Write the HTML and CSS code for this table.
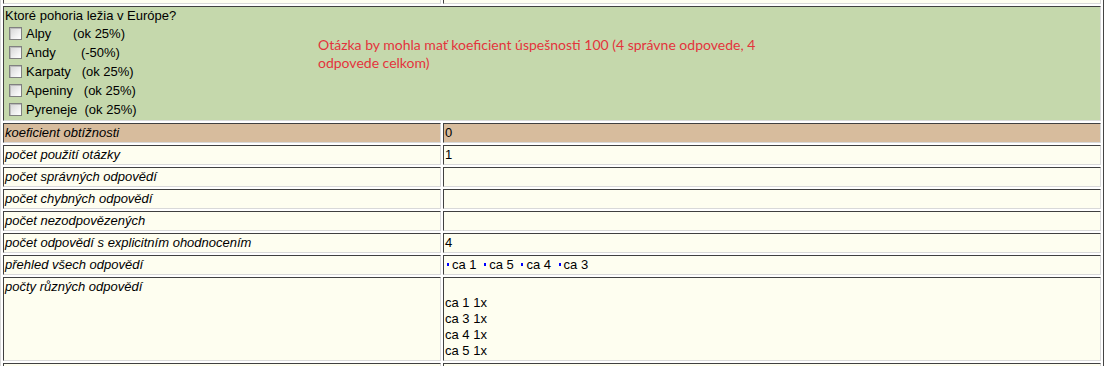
FILE: index.html
```html
<!DOCTYPE html>
<html lang="sk">
<head>
<meta charset="utf-8">
<title>Otázka</title>
<link rel="stylesheet" href="styles.css">
</head>
<body>
<table class="stats">
  <tr class="row">
    <td class="key"></td>
    <td class="val"></td>
  </tr>
  <tr class="row question">
    <td colspan="2" class="qcell">
      <div class="qwrap">
        <div class="qmain">
          <div class="qtitle">Ktoré pohoria ležia v Európe?</div>
          <div class="opt"><input type="checkbox"><span class="otext">Alpy&nbsp;&nbsp;&nbsp;&nbsp;&nbsp;&nbsp;(ok 25%)</span></div>
          <div class="opt"><input type="checkbox"><span class="otext">Andy&nbsp;&nbsp;&nbsp;&nbsp;&nbsp;&nbsp;&nbsp;(-50%)</span></div>
          <div class="opt"><input type="checkbox"><span class="otext">Karpaty&nbsp;&nbsp;&nbsp;(ok 25%)</span></div>
          <div class="opt"><input type="checkbox"><span class="otext">Apeniny&nbsp;&nbsp;&nbsp;(ok 25%)</span></div>
          <div class="opt"><input type="checkbox"><span class="otext">Pyreneje&nbsp;&nbsp;(ok 25%)</span></div>
        </div>
        <div class="note">Otázka by mohla mať koeficient úspešnosti 100 (4 správne odpovede, 4 odpovede celkom)</div>
      </div>
    </td>
  </tr>
  <tr class="row tan">
    <td class="key">koeficient obtížnosti</td>
    <td class="val">0</td>
  </tr>
  <tr class="row">
    <td class="key">počet použití otázky</td>
    <td class="val">1</td>
  </tr>
  <tr class="row">
    <td class="key">počet správných odpovědí</td>
    <td class="val"></td>
  </tr>
  <tr class="row">
    <td class="key">počet chybných odpovědí</td>
    <td class="val"></td>
  </tr>
  <tr class="row">
    <td class="key">počet nezodpovězených</td>
    <td class="val"></td>
  </tr>
  <tr class="row">
    <td class="key">počet odpovědí s explicitním ohodnocením</td>
    <td class="val">4</td>
  </tr>
  <tr class="row">
    <td class="key">přehled všech odpovědí</td>
    <td class="val"><span class="dot first"></span>ca 1 <span class="dot"></span>ca 5 <span class="dot"></span>ca 4 <span class="dot"></span>ca 3</td>
  </tr>
  <tr class="row">
    <td class="key">počty různých odpovědí</td>
    <td class="val"><br>ca 1 1x<br>ca 3 1x<br>ca 4 1x<br>ca 5 1x</td>
  </tr>
  <tr class="row">
    <td class="key"></td>
    <td class="val"></td>
  </tr>
</table>
</body>
</html>
```

FILE: styles.css
```css
html, body {
  margin: 0;
  padding: 0;
  background: #ffffff;
}

body {
  font-family: "Liberation Sans", Arial, sans-serif;
  font-size: 13px;
  line-height: 16px;
  color: #000;
  height: 366px;
  overflow: hidden;
}

.stats {
  width: 1104px;
  margin-top: -19px;
  border-collapse: separate;
  border-spacing: 2px;
  border: 1px solid;
  border-color: #d8d8d8 #444444 #444444 #d8d8d8;
  table-layout: fixed;
}

.stats td {
  padding: 1px;
  border: 1px solid;
  border-color: #404040 #d9d9d9 #d9d9d9 #404040;
  background: #fefef0;
  vertical-align: top;
  line-height: 16px;
}

.stats td.key,
.stats td.val {
  height: 16px;
}

.stats td.key {
  width: 434px;
  font-style: italic;
}

.stats tr.tan td {
  background: #d7bc9d;
}

.stats td.qcell {
  background: #c5d8ac;
}

.qwrap {
  display: flex;
  align-items: flex-start;
}

.qmain {
  width: 313px;
  flex: none;
}

.qtitle {
  height: 16px;
}

.opt {
  display: flex;
  align-items: center;
  height: 19px;
  white-space: nowrap;
}

.otext {
  padding-left: 1px;
}

.opt input {
  -webkit-appearance: none;
  appearance: none;
  box-sizing: border-box;
  width: 13px;
  height: 13px;
  margin: 3px 3px 3px 4px;
  flex: none;
  border: 1px solid #808080;
  border-radius: 0;
  background: linear-gradient(135deg, #d4d4d4 0%, #f4f4f4 70%, #ffffff 100%);
  box-shadow: inset 1px 1px 0 #bdbdbd;
}

.note {
  width: 460px;
  margin-top: 28px;
  font-family: Lato, "Open Sans", sans-serif;
  font-size: 14px;
  line-height: 18px;
  color: #e3343c;
}

.dot {
  display: inline-block;
  width: 2px;
  height: 3px;
  background: #0000ff;
  vertical-align: 3px;
  margin: 0 3px 0 4px;
}

.dot.first {
  margin-left: 2px;
}
```
